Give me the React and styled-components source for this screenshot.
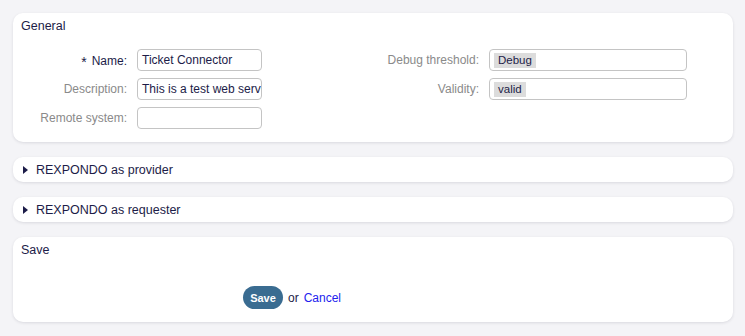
import React from 'react';
import styled, { createGlobalStyle } from 'styled-components';

const GlobalStyle = createGlobalStyle`
  html, body {
    margin: 0;
    padding: 0;
    background: #f4f4f7;
  }
  body {
    font-family: "Liberation Sans", Arial, sans-serif;
    font-size: 12px;
    color: #1c1c48;
  }
`;

const Page = styled.div`
  display: flex;
  flex-direction: column;
  gap: 15px;
  padding: 13px 12px 14px 13px;
`;

const Card = styled.section`
  background: #fff;
  border-radius: 10px;
  box-shadow: 0 1px 3px rgba(30, 30, 60, 0.12);
  padding: ${props => props.pad || '5px 8px 13px 8px'};
`;

const Title = styled.h2`
  margin: 0;
  font-size: 12.5px;
  font-weight: normal;
  line-height: 16px;
  color: #1c1c48;
`;

const FieldGrid = styled.div`
  display: grid;
  grid-template-columns: 106px 125px 1fr 198px;
  column-gap: 10px;
  row-gap: 7px;
  margin-top: 15px;
  margin-right: 38px;
  align-items: center;
`;

const Label = styled.label`
  text-align: right;
  color: ${props => (props.required ? '#1c1c48' : '#8a8a8a')};
  white-space: nowrap;
`;

const Star = styled.span`
  font-size: 14px;
  margin-right: 5px;
  position: relative;
  top: 2px;
`;

const TextInput = styled.div`
  box-sizing: border-box;
  height: 22px;
  border: 1px solid #c4c4c4;
  border-radius: 4px;
  padding: 0 4px;
  line-height: 20px;
  overflow: hidden;
  white-space: nowrap;
  color: #1c1c48;
  font-size: 12px;
`;

const Select = styled.div`
  box-sizing: border-box;
  height: 22px;
  border: 1px solid #c4c4c4;
  border-radius: 4px;
  padding: 3px 4px;
  display: flex;
  align-items: center;
`;

const Tag = styled.span`
  background: #dcdcdc;
  padding: 0 4px;
  line-height: 15px;
  font-size: 11.5px;
  color: #1c1c48;
`;

const Empty = styled.div``;

const Accordion = styled(Card)`
  display: flex;
  align-items: center;
  height: 25px;
  box-sizing: border-box;
  padding: 0 9px;
  gap: 8px;
  font-size: 12.5px;
`;

const Arrow = styled.span`
  width: 0;
  height: 0;
  border-top: 4.5px solid transparent;
  border-bottom: 4.5px solid transparent;
  border-left: 5px solid #1c1c48;
  margin-left: 1px;
`;

const Actions = styled.div`
  display: flex;
  align-items: center;
  gap: 5px;
  margin-top: 28px;
  padding-left: 222px;
`;

const Button = styled.button`
  font-family: inherit;
  font-size: 11px;
  font-weight: bold;
  color: #fff;
  background: #3a6c91;
  border: none;
  border-radius: 12px;
  height: 23px;
  width: 40px;
  padding: 0;
`;

const Link = styled.a`
  color: #2222ee;
  text-decoration: none;
`;

export default function App() {
  return (
    <>
      <GlobalStyle />
      <Page>
        <Card>
          <Title>General</Title>
          <FieldGrid>
            <Label required><Star>*</Star>Name:</Label>
            <TextInput>Ticket Connector</TextInput>
            <Label>Debug threshold:</Label>
            <Select><Tag>Debug</Tag></Select>

            <Label>Description:</Label>
            <TextInput>This is a test web serv</TextInput>
            <Label>Validity:</Label>
            <Select><Tag>valid</Tag></Select>

            <Label>Remote system:</Label>
            <TextInput />
            <Empty />
            <Empty />
          </FieldGrid>
        </Card>
        <Accordion>
          <Arrow />
          REXPONDO as provider
        </Accordion>
        <Accordion>
          <Arrow />
          REXPONDO as requester
        </Accordion>
        <Card pad="5px 8px 13px 8px">
          <Title>Save</Title>
          <Actions>
            <Button>Save</Button>
            <span>or</span>
            <Link href="#">Cancel</Link>
          </Actions>
        </Card>
      </Page>
    </>
  );
}
